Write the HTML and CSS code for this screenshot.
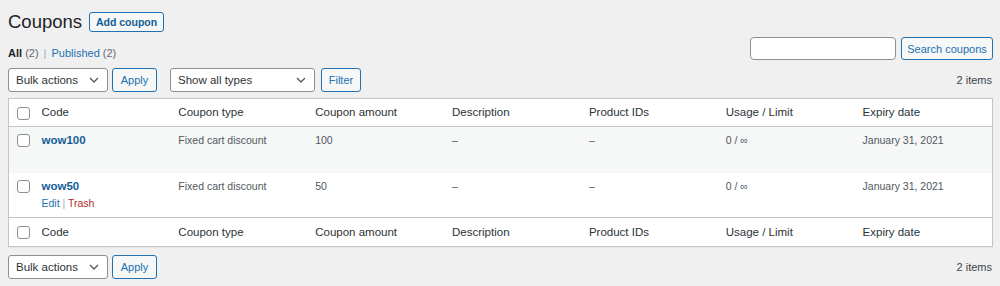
FILE: index.html
```html
<!DOCTYPE html>
<html>
<head>
<meta charset="utf-8">
<link rel="stylesheet" href="styles.css">
</head>
<body>
<div class="wrap">
  <div class="page-head">
    <h1 class="title">Coupons</h1>
    <span class="btn btn-add">Add coupon</span>
  </div>
  <div class="filters-row">
    <ul class="subsubsub">
      <li><span class="current">All</span> <span class="count">(2)</span></li>
      <li class="sep">|</li>
      <li><span class="link">Published</span> <span class="count">(2)</span></li>
    </ul>
    <div class="search-box">
      <span class="input"></span>
      <span class="btn btn-search">Search coupons</span>
    </div>
  </div>
  <div class="tablenav top">
    <div class="actions">
      <div class="select sel-bulk"><span>Bulk actions</span><svg viewBox="0 0 10 6" width="10" height="6"><path d="M1 1l4 4 4-4" fill="none" stroke="#50575e" stroke-width="1.3"/></svg></div>
      <span class="btn btn-apply">Apply</span>
      <div class="select sel-types"><span>Show all types</span><svg viewBox="0 0 10 6" width="10" height="6"><path d="M1 1l4 4 4-4" fill="none" stroke="#50575e" stroke-width="1.3"/></svg></div>
      <span class="btn btn-filter">Filter</span>
    </div>
    <div class="items">2 items</div>
  </div>
  <table class="list">
    <colgroup>
      <col class="c-cb"><col><col><col><col><col><col><col>
    </colgroup>
    <thead>
      <tr>
        <th class="cb"><span class="check"></span></th>
        <th>Code</th><th>Coupon type</th><th>Coupon amount</th><th>Description</th><th>Product IDs</th><th>Usage / Limit</th><th>Expiry date</th>
      </tr>
    </thead>
    <tbody>
      <tr class="alt">
        <td class="cb"><span class="check"></span></td>
        <td><strong class="code">wow100</strong><div class="row-actions hidden">Edit | Trash</div></td>
        <td>Fixed cart discount</td><td>100</td><td>–</td><td>–</td><td>0 / ∞</td><td>January 31, 2021</td>
      </tr>
      <tr>
        <td class="cb"><span class="check"></span></td>
        <td><strong class="code">wow50</strong><div class="row-actions"><span class="edit">Edit</span> <span class="pipe">|</span> <span class="trash">Trash</span></div></td>
        <td>Fixed cart discount</td><td>50</td><td>–</td><td>–</td><td>0 / ∞</td><td>January 31, 2021</td>
      </tr>
    </tbody>
    <tfoot>
      <tr>
        <th class="cb"><span class="check"></span></th>
        <th>Code</th><th>Coupon type</th><th>Coupon amount</th><th>Description</th><th>Product IDs</th><th>Usage / Limit</th><th>Expiry date</th>
      </tr>
    </tfoot>
  </table>
  <div class="tablenav bottom">
    <div class="actions">
      <div class="select sel-bulk"><span>Bulk actions</span><svg viewBox="0 0 10 6" width="10" height="6"><path d="M1 1l4 4 4-4" fill="none" stroke="#50575e" stroke-width="1.3"/></svg></div>
      <span class="btn btn-apply">Apply</span>
    </div>
    <div class="items">2 items</div>
  </div>
</div>
</body>
</html>
```
FILE: styles.css
```css
html, body {
  margin: 0;
  padding: 0;
  background: #f0f0f1;
}
body {
  font-family: "Liberation Sans", Arial, sans-serif;
  font-size: 11px;
  color: #3c434a;
}
.wrap {
  padding: 11px 7px 0 8px;
}
.page-head {
  display: flex;
  align-items: center;
  gap: 7px;
  height: 22px;
}
.title {
  margin: 0;
  font-size: 18.5px;
  font-weight: 400;
  color: #1d2327;
  line-height: 22px;
}
.btn {
  box-sizing: border-box;
  display: inline-flex;
  align-items: center;
  justify-content: center;
  border: 1px solid #2271b1;
  border-radius: 3px;
  background: #f6f7f7;
  color: #2271b1;
  font-size: 11px;
  height: 24px;
}
.btn-add {
  width: 75px;
  height: 20px;
  font-weight: 700;
  font-size: 10.5px;
  color: #135e96;
  background: #f6f7f7;
}
.filters-row {
  display: flex;
  justify-content: space-between;
  align-items: flex-end;
  margin-top: 4px;
}
.subsubsub {
  list-style: none;
  margin: 0 0 -1px 0;
  padding: 0;
  display: flex;
  gap: 5px;
  font-size: 11px;
  line-height: 16px;
  color: #646970;
}
.subsubsub .current {
  font-weight: 700;
  color: #1d2327;
}
.subsubsub .link {
  color: #2271b1;
}
.subsubsub .sep {
  color: #a7aaad;
}
.search-box {
  display: flex;
  gap: 5px;
}
.search-box .input {
  box-sizing: border-box;
  width: 146px;
  height: 23px;
  border: 1px solid #8c8f94;
  border-radius: 4px;
  background: #fff;
}
.btn-search {
  width: 92px;
  height: 23px;
}
.tablenav {
  display: flex;
  justify-content: space-between;
  align-items: center;
  height: 24px;
}
.tablenav.top {
  margin-top: 8px;
}
.tablenav.bottom {
  margin-top: 8px;
}
.actions {
  display: flex;
  align-items: center;
}
.select {
  box-sizing: border-box;
  height: 24px;
  border: 1px solid #8c8f94;
  border-radius: 3px;
  background: #fff;
  display: flex;
  align-items: center;
  justify-content: space-between;
  padding: 0 8px 0 7px;
  font-size: 11.5px;
  color: #2c3338;
}
.sel-bulk {
  width: 100px;
}
.sel-types {
  width: 145px;
  margin-left: 13px;
}
.btn-apply {
  width: 45px;
  margin-left: 4px;
}
.btn-filter {
  width: 40px;
  margin-left: 6px;
}
.items {
  font-size: 11px;
  color: #3c434a;
  padding-right: 1px;
}
.list {
  margin-top: 6px;
  width: 985px;
  table-layout: fixed;
  border-collapse: collapse;
  border: 1px solid #c3c4c7;
  background: #fff;
  box-shadow: 0 1px 1px rgba(0,0,0,0.04);
}
.c-cb {
  width: 26px;
}
.list th, .list td {
  text-align: left;
  vertical-align: top;
  padding: 0 8px 0 7px;
}
.list th {
  font-weight: 400;
  font-size: 11.5px;
  color: #2c3338;
  height: 27px;
  line-height: 27px;
  vertical-align: middle;
}
.list tfoot th {
  height: 28px;
  line-height: 28px;
}
.list thead tr {
  border-bottom: 1px solid #c3c4c7;
}
.list tfoot tr {
  border-top: 1px solid #c3c4c7;
}
.list td {
  font-size: 10.5px;
  color: #50575e;
  padding-top: 6px;
  line-height: 14px;
}
.list tbody tr {
  height: 46px;
}
.list tbody tr + tr {
  height: 45px;
}
.list tr.alt td {
  background: #f6f7f7;
}
.list .cb {
  padding: 0 0 0 8px;
}
.list td.cb {
  padding-top: 7px;
}
.check {
  box-sizing: border-box;
  display: block;
  width: 13px;
  height: 13px;
  border: 1px solid #8c8f94;
  border-radius: 3px;
  background: #fff;
}
.list th .check {
  margin-top: 1px;
}
.code {
  font-size: 11.5px;
  font-weight: 700;
  color: #135e96;
}
.row-actions {
  margin-top: 3px;
  font-size: 10.5px;
  line-height: 14px;
}
.row-actions.hidden {
  visibility: hidden;
}
.row-actions .edit {
  color: #2271b1;
}
.row-actions .pipe {
  color: #a7aaad;
}
.row-actions .trash {
  color: #b32d2e;
}
```
